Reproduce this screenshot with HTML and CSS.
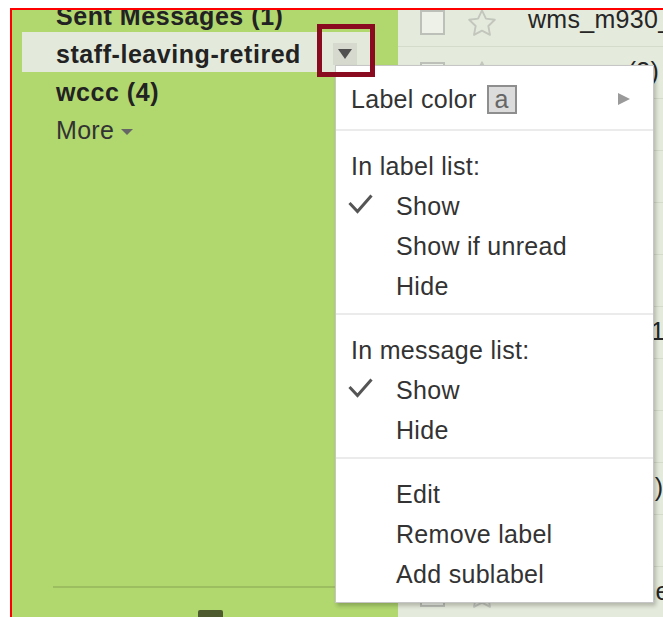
FILE: index.html
```html
<!DOCTYPE html>
<html lang="en">
<head>
<meta charset="utf-8">
<title>Labels</title>
<link rel="stylesheet" href="styles.css">
</head>
<body>
<div class="frame">
  <nav class="sidebar">
    <ul class="labels">
      <li class="label">Sent Messages (1)</li>
      <li class="label current">
        <span class="label-name">staff-leaving-retired</span>
        <span class="label-menu-btn"><span class="down-tri"></span></span>
      </li>
      <li class="label">wccc (4)</li>
      <li class="label more">More <span class="caret"></span></li>
    </ul>
    <div class="sidebar-foot"><span class="foot-tab"></span></div>
  </nav>

  <section class="messages">
    <div class="message-list">
      <div class="msg"><span class="cb"></span><svg class="star" viewBox="1.5 1.5 21 20" width="30" height="27"><polygon points="12,2.5 14.9,8.6 21.5,9.5 16.7,14.1 17.9,20.7 12,17.5 6.1,20.7 7.3,14.1 2.5,9.5 9.1,8.6"/></svg><span class="sender">wms_m930_list</span></div>
      <div class="msg"><span class="cb"></span><svg class="star" viewBox="1.5 1.5 21 20" width="30" height="27"><polygon points="12,2.5 14.9,8.6 21.5,9.5 16.7,14.1 17.9,20.7 12,17.5 6.1,20.7 7.3,14.1 2.5,9.5 9.1,8.6"/></svg><span class="sender">me, ann (3)</span></div>
      <div class="msg"><span class="cb"></span><svg class="star" viewBox="1.5 1.5 21 20" width="30" height="27"><polygon points="12,2.5 14.9,8.6 21.5,9.5 16.7,14.1 17.9,20.7 12,17.5 6.1,20.7 7.3,14.1 2.5,9.5 9.1,8.6"/></svg><span class="sender">me</span></div>
      <div class="msg"><span class="cb"></span><svg class="star" viewBox="1.5 1.5 21 20" width="30" height="27"><polygon points="12,2.5 14.9,8.6 21.5,9.5 16.7,14.1 17.9,20.7 12,17.5 6.1,20.7 7.3,14.1 2.5,9.5 9.1,8.6"/></svg><span class="sender">HR Office</span></div>
      <div class="msg"><span class="cb"></span><svg class="star" viewBox="1.5 1.5 21 20" width="30" height="27"><polygon points="12,2.5 14.9,8.6 21.5,9.5 16.7,14.1 17.9,20.7 12,17.5 6.1,20.7 7.3,14.1 2.5,9.5 9.1,8.6"/></svg><span class="sender">Tom Hale</span></div>
      <div class="msg"><span class="cb"></span><svg class="star" viewBox="1.5 1.5 21 20" width="30" height="27"><polygon points="12,2.5 14.9,8.6 21.5,9.5 16.7,14.1 17.9,20.7 12,17.5 6.1,20.7 7.3,14.1 2.5,9.5 9.1,8.6"/></svg><span class="sender">me</span></div>
      <div class="msg"><span class="cb"></span><svg class="star" viewBox="1.5 1.5 21 20" width="30" height="27"><polygon points="12,2.5 14.9,8.6 21.5,9.5 16.7,14.1 17.9,20.7 12,17.5 6.1,20.7 7.3,14.1 2.5,9.5 9.1,8.6"/></svg><span class="sender">Jo Briggs (1</span></div>
      <div class="msg"><span class="cb"></span><svg class="star" viewBox="1.5 1.5 21 20" width="30" height="27"><polygon points="12,2.5 14.9,8.6 21.5,9.5 16.7,14.1 17.9,20.7 12,17.5 6.1,20.7 7.3,14.1 2.5,9.5 9.1,8.6"/></svg><span class="sender">Kay Dunn</span></div>
      <div class="msg"><span class="cb"></span><svg class="star" viewBox="1.5 1.5 21 20" width="30" height="27"><polygon points="12,2.5 14.9,8.6 21.5,9.5 16.7,14.1 17.9,20.7 12,17.5 6.1,20.7 7.3,14.1 2.5,9.5 9.1,8.6"/></svg><span class="sender">me</span></div>
      <div class="msg"><span class="cb"></span><svg class="star" viewBox="1.5 1.5 21 20" width="30" height="27"><polygon points="12,2.5 14.9,8.6 21.5,9.5 16.7,14.1 17.9,20.7 12,17.5 6.1,20.7 7.3,14.1 2.5,9.5 9.1,8.6"/></svg><span class="sender">Dan Lee (2)</span></div>
      <div class="msg"><span class="cb"></span><svg class="star" viewBox="1.5 1.5 21 20" width="30" height="27"><polygon points="12,2.5 14.9,8.6 21.5,9.5 16.7,14.1 17.9,20.7 12,17.5 6.1,20.7 7.3,14.1 2.5,9.5 9.1,8.6"/></svg><span class="sender">Lin Cho</span></div>
      <div class="msg"><span class="cb"></span><svg class="star" viewBox="1.5 1.5 21 20" width="30" height="27"><polygon points="12,2.5 14.9,8.6 21.5,9.5 16.7,14.1 17.9,20.7 12,17.5 6.1,20.7 7.3,14.1 2.5,9.5 9.1,8.6"/></svg><span class="sender">Mike Thorne</span></div>
    </div>
  </section>

  <div class="callout"></div>

  <div class="label-menu">
    <div class="menu-group">
      <div class="menu-row color-row">Label color <span class="chip">a</span><span class="submenu-arrow"></span></div>
    </div>
    <div class="menu-group">
      <div class="menu-heading">In label list:</div>
      <div class="menu-item"><span class="check"><svg viewBox="0 0 25 20" width="25" height="20"><polyline points="1.5,9 9.5,17.5 23.5,1.5"/></svg></span>Show</div>
      <div class="menu-item"><span class="check"></span>Show if unread</div>
      <div class="menu-item"><span class="check"></span>Hide</div>
    </div>
    <div class="menu-group">
      <div class="menu-heading">In message list:</div>
      <div class="menu-item"><span class="check"><svg viewBox="0 0 25 20" width="25" height="20"><polyline points="1.5,9 9.5,17.5 23.5,1.5"/></svg></span>Show</div>
      <div class="menu-item"><span class="check"></span>Hide</div>
    </div>
    <div class="menu-group">
      <div class="menu-item"><span class="check"></span>Edit</div>
      <div class="menu-item"><span class="check"></span>Remove label</div>
      <div class="menu-item"><span class="check"></span>Add sublabel</div>
    </div>
  </div>
</div>
</body>
</html>
```

FILE: styles.css
```css
html, body {
  margin: 0;
  height: 100%;
  overflow: hidden;
  background: #ffffff;
}

body {
  font-family: "Liberation Sans", Arial, sans-serif;
  font-size: 25px;
  letter-spacing: 0.3px;
  color: #222;
}

/* outer frame with red top and left rule */
.frame {
  position: relative;
  margin: 8px 0 0 10px;
  height: 609px;
  border-top: 2px solid #ff0000;
  border-left: 2px solid #ff0000;
  display: flex;
  overflow: hidden;
}

/* ---------- left label column ---------- */
.sidebar {
  width: 386px;
  flex: none;
  background: #b1d76f;
  display: flex;
  flex-direction: column;
  overflow: hidden;
}

.labels {
  list-style: none;
  margin: -13px 0 0 0;
  padding: 0;
}

.label {
  line-height: 38px;
  padding-left: 44px;
  font-weight: bold;
  letter-spacing: 0.55px;
  color: #222;
  white-space: nowrap;
}

.label.current {
  display: flex;
  align-items: center;
  box-sizing: border-box;
  height: 40px;
  margin: -3px 26px 1px 10px;
  padding: 3px 15px 0 34px;
  background: #e4eadb;
}

.label-name {
  line-height: 38px;
}

.label-menu-btn {
  margin-left: auto;
  width: 24px;
  height: 22px;
  background: #d5d9ce;
  display: flex;
  align-items: center;
  justify-content: center;
}

.down-tri {
  width: 0;
  height: 0;
  border-left: 7px solid transparent;
  border-right: 7px solid transparent;
  border-top: 10px solid #505050;
}

.label.more {
  font-weight: normal;
  letter-spacing: 0.3px;
  color: #333;
  display: flex;
  align-items: center;
}

.caret {
  margin-left: 7px;
  margin-top: 3px;
  width: 0;
  height: 0;
  border-left: 6px solid transparent;
  border-right: 6px solid transparent;
  border-top: 6px solid #666;
}

.sidebar-foot {
  margin: auto 26px 0 41px;
  height: 33px;
  box-sizing: border-box;
  border-top: 2px solid #9cbe60;
  padding: 22px 0 0 145px;
}

.foot-tab {
  display: block;
  width: 25px;
  height: 9px;
  background: #4e5b2f;
  border-radius: 2px 2px 0 0;
}

/* ---------- message list ---------- */
.messages {
  flex: 1;
  background: #e5ebdc;
  overflow: hidden;
}

.message-list {
  margin-top: -15px;
}

.msg {
  display: flex;
  align-items: flex-start;
  box-sizing: border-box;
  height: 52px;
  padding-left: 22px;
  border-bottom: 1px solid #d4dbca;
  white-space: nowrap;
}

.cb {
  flex: none;
  margin-top: 15px;
  width: 25px;
  height: 25px;
  box-sizing: border-box;
  border: 2px solid #bcc0b8;
  background: #edf1e8;
}

.star {
  flex: none;
  margin: 14px 0 0 22px;
  fill: none;
  stroke: #c2c6bd;
  stroke-width: 1.4;
  stroke-linejoin: round;
}

.sender {
  margin-left: 31px;
  padding-top: 5px;
  line-height: 38px;
  color: #262626;
}

/* ---------- annotation frame round the menu button ---------- */
.callout {
  position: absolute;
  left: 305px;
  top: 14px;
  width: 58px;
  height: 53px;
  box-sizing: border-box;
  border: 5px solid #8a0b20;
  z-index: 3;
}

/* ---------- label drop-down menu ---------- */
.label-menu {
  position: absolute;
  left: 323px;
  top: 55px;
  width: 319px;
  box-sizing: border-box;
  background: #ffffff;
  border: 1px solid #c6c6c6;
  box-shadow: 2px 3px 4px rgba(0, 0, 0, 0.22);
  color: #333;
  z-index: 2;
}

.menu-group {
  padding: 15px 0 7px;
  border-top: 2px solid #ebebeb;
}

.menu-group:first-child {
  padding: 13px 0 10px;
  border-top: 0;
}

.menu-group:last-child {
  padding-bottom: 8px;
}

.menu-row,
.menu-heading {
  line-height: 40px;
  padding-left: 15px;
  white-space: nowrap;
}

.color-row {
  display: flex;
  align-items: center;
}

.chip {
  margin-left: 10px;
  width: 30px;
  height: 29px;
  box-sizing: border-box;
  border: 2px solid #8e8e8e;
  background: #dcdcdc;
  color: #666;
  line-height: 24px;
  text-align: center;
}

.submenu-arrow {
  margin-left: auto;
  margin-right: 23px;
  width: 0;
  height: 0;
  border-top: 6px solid transparent;
  border-bottom: 6px solid transparent;
  border-left: 12px solid #9a9a9a;
}

.menu-item {
  display: flex;
  line-height: 40px;
  padding-left: 12px;
  white-space: nowrap;
}

.check {
  flex: none;
  width: 48px;
  height: 40px;
}

.check svg {
  display: block;
  margin-top: 8px;
  fill: none;
  stroke: #555;
  stroke-width: 3;
}
```
